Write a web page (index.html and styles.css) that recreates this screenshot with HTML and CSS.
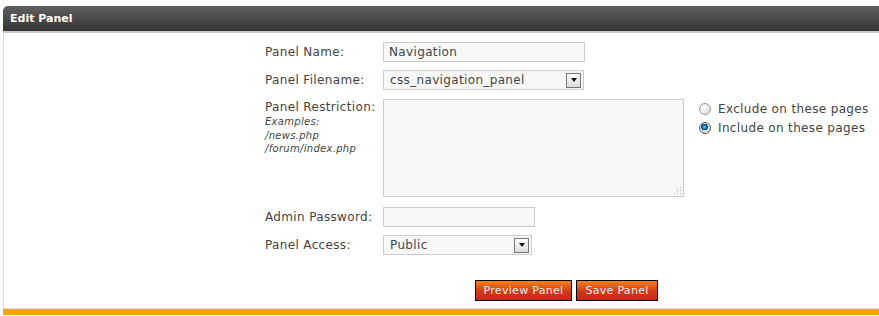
FILE: index.html
```html
<!DOCTYPE html>
<html>
<head>
<meta charset="utf-8">
<link rel="stylesheet" href="styles.css">
</head>
<body>
<div class="page">
  <div class="panel">
    <div class="panel-head">Edit Panel</div>
    <div class="panel-body">
      <form class="form">
        <div class="row row-name">
          <label class="lbl">Panel Name:</label>
          <div class="ctl"><input class="txt txt-name" type="text" value="Navigation"></div>
        </div>
        <div class="row row-file">
          <label class="lbl">Panel Filename:</label>
          <div class="ctl">
            <div class="sel sel-file"><span class="sel-val">css_navigation_panel</span><span class="sel-btn"><span class="tri"></span></span></div>
          </div>
        </div>
        <div class="row row-restr">
          <div class="lbl lbl-top">
            <div>Panel Restriction:</div>
            <div class="ex">Examples:<br>/news.php<br>/forum/index.php</div>
          </div>
          <div class="ctl ctl-restr">
            <div class="area"><span class="grip"></span></div>
            <div class="radios">
              <div class="radio-row"><span class="radio"></span>Exclude on these pages</div>
              <div class="radio-row"><span class="radio on"></span>Include on these pages</div>
            </div>
          </div>
        </div>
        <div class="row row-pass">
          <label class="lbl">Admin Password:</label>
          <div class="ctl"><input class="txt txt-pass" type="password" value=""></div>
        </div>
        <div class="row row-access">
          <label class="lbl">Panel Access:</label>
          <div class="ctl">
            <div class="sel sel-access"><span class="sel-val">Public</span><span class="sel-btn"><span class="tri"></span></span></div>
          </div>
        </div>
        <div class="buttons">
          <span class="btn btn-preview">Preview Panel</span>
          <span class="btn btn-save">Save Panel</span>
        </div>
      </form>
    </div>
    <div class="panel-foot"></div>
  </div>
</div>
</body>
</html>
```
FILE: styles.css
```css
html, body {
  margin: 0;
  padding: 0;
  background: #ffffff;
  overflow: hidden;
}
body {
  font-family: "DejaVu Sans", Verdana, sans-serif;
  color: #444444;
}
.page {
  padding: 6px 0 0 3px;
}
.panel {
  width: 876px;
}
.panel-head {
  height: 25px;
  line-height: 25px;
  padding-left: 7px;
  border-top-left-radius: 5px;
  background: linear-gradient(#606060, #333333);
  color: #ffffff;
  font-weight: bold;
  font-size: 11px;
  border-bottom: 2px solid #c9c9c9;
}
.panel-body {
  border-left: 1px solid #dddddd;
  border-bottom: 1px solid #dddddd;
  padding: 9px 0 7px 261px;
}
.panel-foot {
  height: 6px;
  background: #f9a602;
}
.form {
  margin: 0;
  font-size: 12px;
  letter-spacing: 0.35px;
}
.row {
  display: flex;
  align-items: center;
}
.lbl {
  width: 118px;
  flex: none;
}
.row-file { margin-top: 8px; }
.row-restr { margin-top: 9px; align-items: flex-start; }
.row-pass { margin-top: 10px; }
.row-access { margin-top: 8px; }
.lbl-top {
  padding-top: 1px;
}
.ex {
  font-style: italic;
  font-size: 10px;
  letter-spacing: 0.3px;
  line-height: 13.5px;
  margin-top: 1px;
}
.txt {
  box-sizing: border-box;
  height: 20px;
  border: 1px solid #cccccc;
  background: #f8f8f8;
  font-family: "DejaVu Sans", Verdana, sans-serif;
  font-size: 12px;
  letter-spacing: 0.35px;
  color: #444444;
  padding: 0 5px;
  margin: 0;
  outline: none;
}
.txt-name { width: 202px; }
.txt-pass { width: 152px; }
.sel {
  box-sizing: border-box;
  height: 20px;
  border: 1px solid #cccccc;
  background: #f8f8f8;
  display: flex;
  align-items: center;
  justify-content: space-between;
  padding: 0 2px 0 6px;
}
.sel-file { width: 201px; }
.sel-access { width: 149px; }
.sel-btn {
  box-sizing: border-box;
  width: 15px;
  height: 15px;
  border: 1px solid #777777;
  background: linear-gradient(#ffffff, #dcdcdc);
  display: flex;
  align-items: center;
  justify-content: center;
}
.tri {
  width: 0;
  height: 0;
  border-left: 3px solid transparent;
  border-right: 3px solid transparent;
  border-top: 4px solid #111111;
}
.ctl-restr {
  display: flex;
  gap: 15px;
}
.area {
  box-sizing: border-box;
  width: 301px;
  height: 98px;
  border: 1px solid #cccccc;
  background: #f8f8f8;
  position: relative;
}
.grip {
  position: absolute;
  right: 2px;
  bottom: 2px;
  width: 8px;
  height: 8px;
  background:
    radial-gradient(circle, #aaaaaa 0.8px, transparent 1px) 0 0 / 3px 3px;
  clip-path: polygon(100% 0, 100% 100%, 0 100%);
}
.radios {
  padding-top: 0;
}
.radio-row {
  display: flex;
  align-items: center;
  height: 19px;
  font-size: 12px;
}
.radio {
  box-sizing: border-box;
  width: 12px;
  height: 12px;
  border-radius: 50%;
  border: 1px solid #9a9a9a;
  background: radial-gradient(circle at 40% 35%, #ffffff, #d8d8d8);
  margin-right: 7px;
  flex: none;
}
.radio.on {
  border-color: #555555;
  background:
    radial-gradient(circle at 45% 40%, #7fc4f0 0, #1a6fb0 2px, #0b3e6e 3.2px, transparent 3.6px),
    radial-gradient(circle at 40% 35%, #ffffff, #cfcfcf);
}
.buttons {
  display: flex;
  gap: 4px;
  margin-top: 25px;
  padding-left: 210px;
}
.btn {
  box-sizing: border-box;
  height: 21px;
  line-height: 19px;
  border: 1px solid #000000;
  background: linear-gradient(#f6821f, #cf3a16 55%, #c9261a);
  color: #ffe8e8;
  font-size: 11px;
  letter-spacing: 0.3px;
  text-align: center;
}
.btn-preview { width: 97px; }
.btn-save { width: 82px; }
```
